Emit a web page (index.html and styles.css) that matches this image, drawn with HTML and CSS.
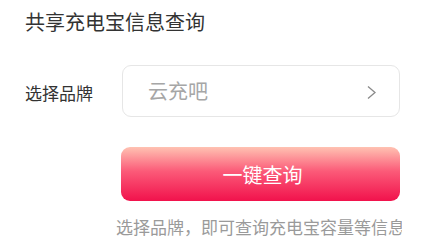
FILE: index.html
```html
<!DOCTYPE html>
<html lang="zh">
<head>
<meta charset="utf-8">
<link rel="stylesheet" href="styles.css">
</head>
<body>
<div class="page">
  <h1 class="title">共享充电宝信息查询</h1>
  <div class="row">
    <div class="label">选择品牌</div>
    <div class="select">
      <span class="value">云充吧</span>
      <svg class="chev" width="11" height="15" viewBox="0 0 11 15"><path d="M2 1.5 L9 7.5 L2 13.5" fill="none" stroke="#8a8a8a" stroke-width="1.3"/></svg>
    </div>
  </div>
  <div class="btn">一键查询</div>
  <div class="tip">选择品牌，即可查询充电宝容量等信息</div>
</div>
</body>
</html>
```

FILE: styles.css
```css
html, body { margin: 0; padding: 0; background: #fff; }
body { font-family: "Noto Sans CJK SC", "Noto Sans", sans-serif; }
.page { width: 428px; height: 240px; box-sizing: border-box; padding: 8px 28px 0 25px; overflow: hidden; }
.title { margin: 0; font-size: 20px; line-height: 28px; font-weight: 400; color: #333; }
.row { display: flex; align-items: center; margin-top: 29px; }
.label { width: 97px; font-size: 17px; line-height: 24px; color: #333; padding-top: 4px; }
.select { flex: 1; height: 52px; box-sizing: border-box; border: 1px solid #e6e6e6; border-radius: 9px; display: flex; align-items: center; justify-content: space-between; padding: 0 22px 0 25px; }
.value { font-size: 20px; color: #a6a6a6; line-height: 28px; }
.chev { display: block; margin-top: 2px; }
.btn { margin: 30px 0 0 96px; height: 54px; border-radius: 9px; background: linear-gradient(180deg, #ffc2b2 0%, #fb5a78 45%, #f1124c 100%); color: #fff; font-size: 20px; display: flex; align-items: center; justify-content: center; padding-left: 4px; }
.tip { margin: 14px -2px 0 91px; font-size: 17px; line-height: 24px; color: #9a9a9a; white-space: nowrap; overflow: hidden; }
```
